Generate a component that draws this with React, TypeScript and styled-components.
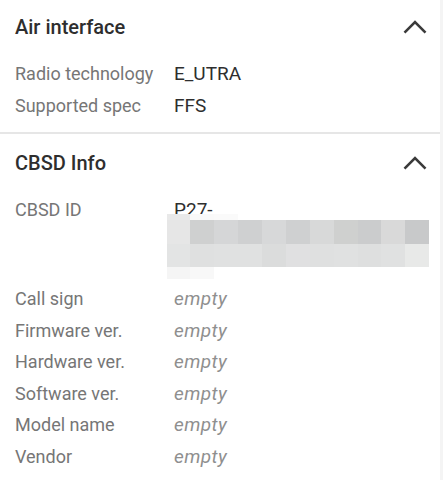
import styled, { createGlobalStyle } from "styled-components";

const GlobalStyle = createGlobalStyle`
  html, body {
    margin: 0;
    padding: 0;
    background: #ffffff;
  }
  body {
    font-family: Roboto, "Noto Sans", Arial, sans-serif;
  }
`;

const Page = styled.div`
  width: 440px;
  min-height: 480px;
  background: #ffffff;
  border-right: 3px solid #f4f4f4;
`;

const Section = styled.section<{ $top: number; $divider?: boolean }>`
  padding: ${(p) => p.$top}px 15px 11px 15px;
  border-bottom: ${(p) => (p.$divider ? "2px solid #e6e6e6" : "none")};
`;

const Header = styled.div`
  display: flex;
  align-items: center;
  justify-content: space-between;
  height: 28px;
`;

const Title = styled.h2`
  margin: 0;
  font-size: 20px;
  line-height: 28px;
  font-weight: 500;
  color: #2e2e2e;
`;

const ToggleIcon = styled.svg`
  width: 24px;
  height: 14px;
  margin-right: -2px;
  flex-shrink: 0;
`;

const Fields = styled.div`
  display: grid;
  grid-template-columns: 159px 1fr;
  margin-top: 17px;
  line-height: 31.5px;
`;

const Label = styled.div`
  font-size: 18px;
  color: #767676;
`;

const Value = styled.div<{ $empty?: boolean }>`
  font-size: 19px;
  color: ${(p) => (p.$empty ? "#8f8f8f" : "#2e2e2e")};
  font-style: ${(p) => (p.$empty ? "italic" : "normal")};
  letter-spacing: ${(p) => (p.$empty ? "0.4px" : "0")};
`;

const Redacted = styled.svg`
  display: block;
  width: 262px;
  height: 65px;
  margin: -11.5px 0 4px -7px;
`;

const colX = [0, 23, 47, 71, 95, 119, 143, 167, 191, 214, 238, 262];

const mosaic: { row: [number, number]; colors: string[] }[] = [
  { row: [0, 6], colors: ["#e9e9e9", "#f9f9f9", "#fafafa"] },
  {
    row: [6, 30],
    colors: ["#e6e6e6", "#cfd0d0", "#d5d6d7", "#cfd0d1", "#d7d8d9", "#cfd0d1", "#d8d9d9", "#cfd0cf", "#cbcccd", "#d9d9d9", "#c8c9ca"],
  },
  {
    row: [30, 53],
    colors: ["#e3e4e4", "#dfe0e0", "#e0e1e1", "#e0e1e1", "#dbdcdc", "#e0e0e1", "#dfe0e0", "#e0e1e1", "#dedfdf", "#e0e1e1", "#e8e9e8"],
  },
  { row: [53, 65], colors: ["#f5f5f5", "#f8f8f8"] },
];

function ExpandLess() {
  return (
    <ToggleIcon viewBox="0 0 24 14">
      <polyline points="1.5,12.6 12,2 22.5,12.6" fill="none" stroke="#3a3a3a" strokeWidth="2.6" />
    </ToggleIcon>
  );
}

function Mosaic() {
  return (
    <Redacted viewBox="0 0 262 65">
      {mosaic.map((r, ri) =>
        r.colors.map((c, ci) => (
          <rect
            key={`${ri}-${ci}`}
            x={colX[ci]}
            y={r.row[0]}
            width={colX[ci + 1] - colX[ci]}
            height={r.row[1] - r.row[0]}
            fill={c}
          />
        ))
      )}
    </Redacted>
  );
}

const cbsdFields = ["Call sign", "Firmware ver.", "Hardware ver.", "Software ver.", "Model name", "Vendor"];

export default function App() {
  return (
    <Page>
      <GlobalStyle />
      <Section $top={13} $divider>
        <Header>
          <Title>Air interface</Title>
          <ExpandLess />
        </Header>
        <Fields>
          <Label>Radio technology</Label>
          <Value>E_UTRA</Value>
          <Label>Supported spec</Label>
          <Value>FFS</Value>
        </Fields>
      </Section>
      <Section $top={15}>
        <Header>
          <Title>CBSD Info</Title>
          <ExpandLess />
        </Header>
        <Fields>
          <Label>CBSD ID</Label>
          <Value>
            P27-
            <Mosaic />
          </Value>
          {cbsdFields.flatMap((f) => [
            <Label key={`${f}-l`}>{f}</Label>,
            <Value key={`${f}-v`} $empty>
              empty
            </Value>,
          ])}
        </Fields>
      </Section>
    </Page>
  );
}
